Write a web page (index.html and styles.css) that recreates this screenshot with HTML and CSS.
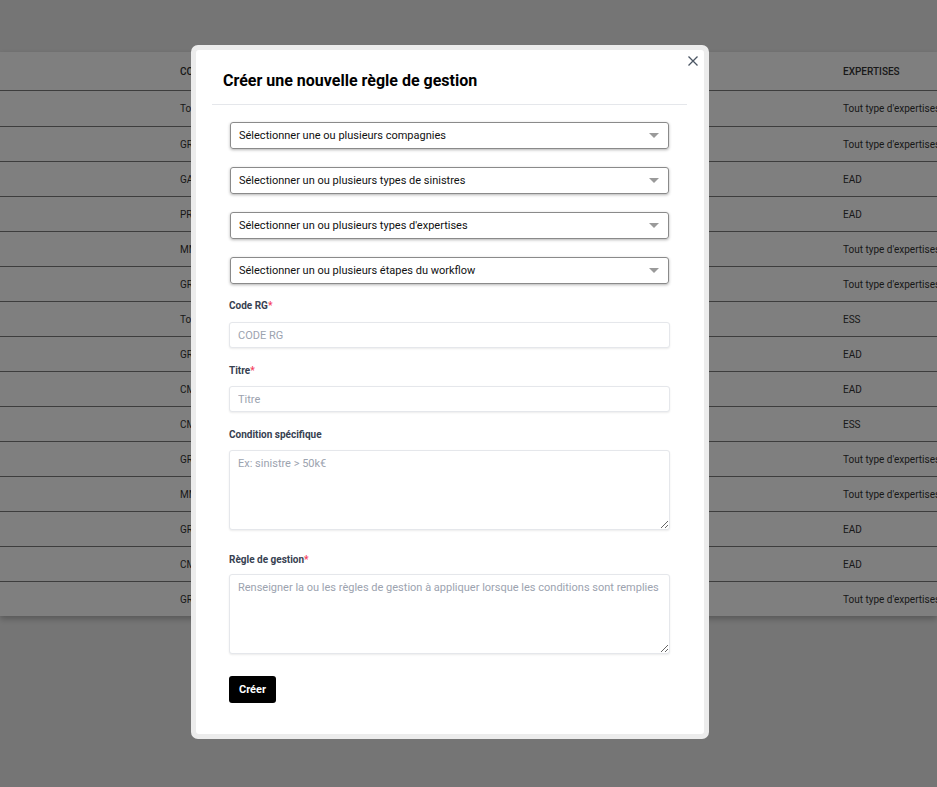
FILE: index.html
```html
<!DOCTYPE html>
<html lang="fr">
<head>
<meta charset="utf-8">
<title>Règles de gestion</title>
<link rel="stylesheet" href="styles.css">
</head>
<body>
<div class="page">
  <div class="table">
    <div class="row head"><div></div><div class="c1">COMPAGNIES</div><div class="c2">EXPERTISES</div></div>
    <div class="row"><div></div><div class="c1">Tous</div><div class="c2">Tout type d'expertises</div></div>
    <div class="row"><div></div><div class="c1">GROUPAMA</div><div class="c2">Tout type d'expertises</div></div>
    <div class="row"><div></div><div class="c1">GAN</div><div class="c2">EAD</div></div>
    <div class="row"><div></div><div class="c1">PREDICA</div><div class="c2">EAD</div></div>
    <div class="row"><div></div><div class="c1">MMA</div><div class="c2">Tout type d'expertises</div></div>
    <div class="row"><div></div><div class="c1">GROUPAMA</div><div class="c2">Tout type d'expertises</div></div>
    <div class="row"><div></div><div class="c1">Tous</div><div class="c2">ESS</div></div>
    <div class="row"><div></div><div class="c1">GROUPAMA</div><div class="c2">EAD</div></div>
    <div class="row"><div></div><div class="c1">CMAM</div><div class="c2">EAD</div></div>
    <div class="row"><div></div><div class="c1">CMAM</div><div class="c2">ESS</div></div>
    <div class="row"><div></div><div class="c1">GROUPAMA</div><div class="c2">Tout type d'expertises</div></div>
    <div class="row"><div></div><div class="c1">MMA</div><div class="c2">Tout type d'expertises</div></div>
    <div class="row"><div></div><div class="c1">GROUPAMA</div><div class="c2">EAD</div></div>
    <div class="row"><div></div><div class="c1">CMAM</div><div class="c2">EAD</div></div>
    <div class="row"><div></div><div class="c1">GROUPAMA</div><div class="c2">Tout type d'expertises</div></div>
  </div>
</div>

<div class="overlay">
  <div class="modal">
    <div class="modal-inner">
      <button class="close" aria-label="Fermer">
        <svg width="10" height="10" viewBox="0 0 10 10"><path d="M0.5 0.5 L9.5 9.5 M9.5 0.5 L0.5 9.5" stroke="#4b5563" stroke-width="1.3" fill="none"/></svg>
      </button>
      <div class="modal-head">
        <h2>Créer une nouvelle règle de gestion</h2>
      </div>
      <form class="form">
        <div class="select"><span>Sélectionner une ou plusieurs compagnies</span><i class="caret"></i></div>
        <div class="select"><span>Sélectionner un ou plusieurs types de sinistres</span><i class="caret"></i></div>
        <div class="select"><span>Sélectionner un ou plusieurs types d'expertises</span><i class="caret"></i></div>
        <div class="select"><span>Sélectionner un ou plusieurs étapes du workflow</span><i class="caret"></i></div>

        <div class="field first">
          <label>Code RG<span class="req">*</span></label>
          <input class="input" type="text" placeholder="CODE RG">
        </div>
        <div class="field">
          <label>Titre<span class="req">*</span></label>
          <input class="input" type="text" placeholder="Titre">
        </div>
        <div class="field area">
          <label>Condition spécifique</label>
          <textarea class="textarea" placeholder="Ex: sinistre &gt; 50k€"></textarea>
        </div>
        <div class="field area">
          <label>Règle de gestion<span class="req">*</span></label>
          <textarea class="textarea" placeholder="Renseigner la ou les règles de gestion à appliquer lorsque les conditions sont remplies"></textarea>
        </div>
        <button type="button" class="btn">Créer</button>
      </form>
    </div>
  </div>
</div>
</body>
</html>
```

FILE: styles.css
```css
* { box-sizing: border-box; }

html, body {
  margin: 0;
  padding: 0;
  height: 100%;
  overflow: hidden;
}

body {
  background: #ebebeb;
  font-family: Roboto, "Liberation Sans", Arial, sans-serif;
  color: #111;
}

.page {
  padding-top: 52px;
}

.table {
  background: #fff;
  box-shadow: 0 3px 6px rgba(0, 0, 0, 0.25);
}

.row {
  display: grid;
  grid-template-columns: 180px 663px 1fr;
  height: 35px;
  align-items: center;
  border-top: 1px solid #7a7a7a;
  font-size: 10px;
  color: #333;
  white-space: nowrap;
  overflow: hidden;
}

.row.head {
  height: 39px;
  border-top: none;
  border-bottom: 1px solid #7a7a7a;
  font-weight: 500;
}

.row.head + .row { border-top: none; }

.overlay {
  position: fixed;
  inset: 0;
  background: rgba(0, 0, 0, 0.5);
  padding: 45px 0 0 191px;
}

.modal {
  width: 518px;
  border: 5px solid #ececec;
  border-radius: 7px;
  background: #ececec;
}

.modal-inner {
  position: relative;
  background: #fff;
  border-radius: 3px;
  padding: 0 17px 31px 16px;
}

.close {
  position: absolute;
  top: 4px;
  right: 4px;
  width: 14px;
  height: 14px;
  padding: 2px;
  border: 0;
  background: transparent;
  display: flex;
  align-items: center;
  justify-content: center;
}

.modal-head {
  border-bottom: 1px solid #e5e7eb;
  padding: 21px 11px 14px;
}

.modal-head h2 {
  margin: 0;
  font-size: 16px;
  line-height: 19px;
  font-weight: 700;
  color: #000;
}

.form {
  padding: 17px 17px 0 17px;
  display: flex;
  flex-direction: column;
  align-items: flex-start;
}

.select {
  align-self: stretch;
  margin: 0 1px 18px;
  height: 27px;
  border: 1px solid #8a8a8a;
  border-radius: 3px;
  box-shadow: 0 1px 3px rgba(0, 0, 0, 0.3);
  display: flex;
  align-items: center;
  justify-content: space-between;
  padding: 0 9px 0 8px;
  font-size: 11px;
  color: #111;
}

.select:nth-of-type(4) { margin-bottom: 15px; }

.caret {
  width: 0;
  height: 0;
  border-left: 5px solid transparent;
  border-right: 5px solid transparent;
  border-top: 5px solid #9a9a9a;
}

.field {
  align-self: stretch;
  display: flex;
  flex-direction: column;
  margin-bottom: 16px;
}

.field.area { margin-bottom: 22px; }

.field label {
  font-size: 10px;
  line-height: 14px;
  font-weight: 700;
  color: #374151;
  margin-bottom: 8px;
}

.field.first label { margin-bottom: 9px; }
.field.area + .field.area label { margin-top: 1px; margin-bottom: 7px; }

.req { color: #f43f5e; }

.input,
.textarea {
  font-family: Roboto, "Liberation Sans", Arial, sans-serif;
  font-size: 11px;
  color: #111;
  border: 1px solid #e5e7eb;
  border-radius: 3px;
  box-shadow: 0 1px 2px rgba(0, 0, 0, 0.08);
  padding: 0 8px;
  outline: none;
  background: #fff;
}

.input { height: 26px; }

.textarea {
  display: block;
  height: 80px;
  padding-top: 6px;
  resize: vertical;
}

.input::placeholder,
.textarea::placeholder { color: #9ca3af; }

.btn {
  height: 27px;
  padding: 0 10px;
  background: #000;
  color: #fff;
  border: 0;
  border-radius: 3px;
  font-family: Roboto, "Liberation Sans", Arial, sans-serif;
  font-size: 11px;
  font-weight: 700;
}
```
